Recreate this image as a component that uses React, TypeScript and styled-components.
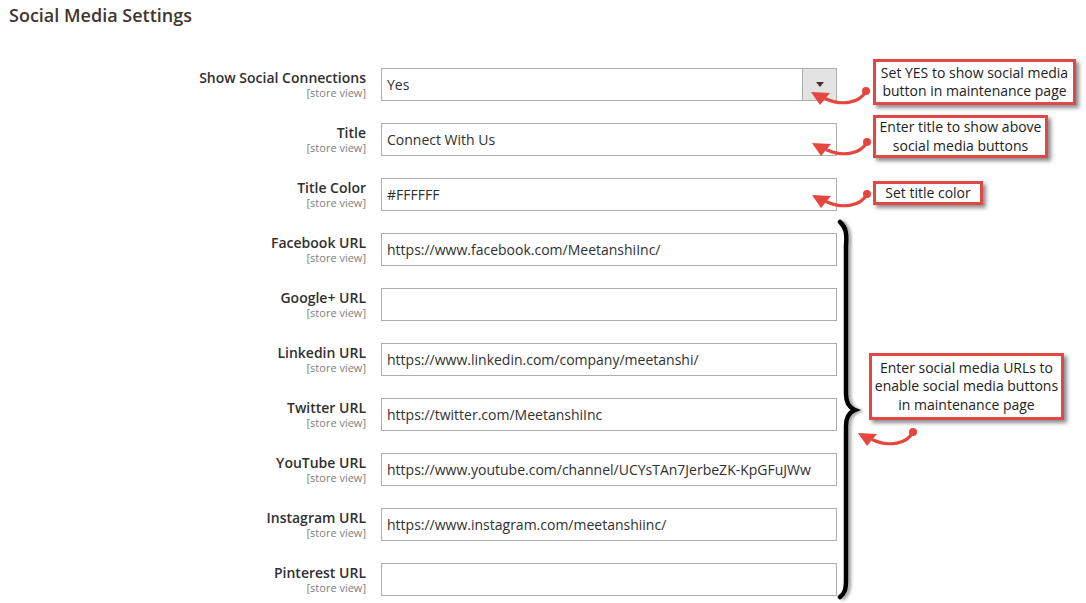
import React from "react";
import styled, { createGlobalStyle } from "styled-components";

const GlobalStyle = createGlobalStyle`
  html, body {
    margin: 0;
    padding: 0;
    background: #ffffff;
  }
  body {
    font-family: "Open Sans", "Liberation Sans", sans-serif;
  }
`;

interface Field {
  label: string;
  value: string;
  select?: boolean;
}

const fields: Field[] = [
  { label: "Show Social Connections", value: "Yes", select: true },
  { label: "Title", value: "Connect With Us" },
  { label: "Title Color", value: "#FFFFFF" },
  { label: "Facebook URL", value: "https://www.facebook.com/MeetanshiInc/" },
  { label: "Google+ URL", value: "" },
  { label: "Linkedin URL", value: "https://www.linkedin.com/company/meetanshi/" },
  { label: "Twitter URL", value: "https://twitter.com/MeetanshiInc" },
  {
    label: "YouTube URL",
    value: "https://www.youtube.com/channel/UCYsTAn7JerbeZK-KpGFuJWw",
  },
  { label: "Instagram URL", value: "https://www.instagram.com/meetanshiinc/" },
  { label: "Pinterest URL", value: "" },
];

// callouts over the form
const notes = [
  { left: 873, top: 59, width: 203, height: 46, lines: ["Set YES to show social media", "button in maintenance page"] },
  { left: 873, top: 115, width: 175, height: 43, lines: ["Enter title to show above", "social media buttons"] },
  { left: 873, top: 181, width: 110, height: 24, lines: ["Set title color"] },
  {
    left: 869,
    top: 353,
    width: 195,
    height: 67,
    lines: ["Enter social media URLs to", "enable social media buttons", "in maintenance page"],
  },
];

const arrows = [
  { x: 866, y: 91 },
  { x: 867, y: 142 },
  { x: 867, y: 194 },
  { x: 913, y: 432 },
];

const Arrow = ({ x, y }: { x: number; y: number }) => (
  <g transform={`translate(${x} ${y})`}>
    <path
      d="M0 0 C -6 12, -24 15, -40 8"
      fill="none"
      stroke="#e5473f"
      strokeWidth={3.2}
      strokeLinecap="round"
    />
    <circle cx={0} cy={0} r={4} fill="#e5473f" />
    <polygon points="-55,1 -36,2 -46,14" fill="#e5473f" />
  </g>
);

const App = () => {
  return (
    <Page>
      <GlobalStyle />
      <SectionTitle>Social Media Settings</SectionTitle>
      <Form>
        {fields.map((f) => (
          <React.Fragment key={f.label}>
            <LabelCell>
              <LabelText>{f.label}</LabelText>
              <Scope>[store view]</Scope>
            </LabelCell>
            {f.select ? (
              <SelectBox>
                <SelectValue>{f.value}</SelectValue>
                <SelectButton>
                  <Caret />
                </SelectButton>
              </SelectBox>
            ) : (
              <TextInput readOnly value={f.value} />
            )}
          </React.Fragment>
        ))}
      </Form>

      <Overlay width="1086" height="603" viewBox="0 0 1086 603">
        <defs>
          <filter id="braceShadow" x="-50%" y="-10%" width="200%" height="120%">
            <feDropShadow dx="3" dy="1" stdDeviation="1.6" floodColor="#000" floodOpacity="0.35" />
          </filter>
        </defs>
        <path
          d="M840 222 C 846 227, 847 234, 846 246 L 846 394 C 846 403, 850 408, 855 410 C 850 412, 846 417, 846 426 L 846 580 C 846 589, 845 593, 840 597"
          fill="none"
          stroke="#000"
          strokeWidth={4.5}
          strokeLinecap="round"
          filter="url(#braceShadow)"
        />
        {arrows.map((a, i) => (
          <Arrow key={i} x={a.x} y={a.y} />
        ))}
      </Overlay>

      {notes.map((n, i) => (
        <Callout key={i} style={{ left: n.left, top: n.top, width: n.width, height: n.height }}>
          {n.lines.map((l) => (
            <div key={l}>{l}</div>
          ))}
        </Callout>
      ))}
    </Page>
  );
};
export default App;

const Page = styled.div`
  position: relative;
  width: 1086px;
  height: 603px;
  overflow: hidden;
  background: #ffffff;
`;

const SectionTitle = styled.h2`
  margin: 0;
  padding: 3px 0 0 9px;
  font-size: 18px;
  line-height: 24px;
  font-weight: 600;
  color: #41362f;
`;

const Form = styled.div`
  display: grid;
  grid-template-columns: 366px 456px;
  grid-auto-rows: 33px;
  column-gap: 15px;
  row-gap: 22px;
  margin-top: 41px;
`;

const LabelCell = styled.div`
  display: flex;
  flex-direction: column;
  align-items: flex-end;
  text-align: right;
`;

const LabelText = styled.span`
  font-size: 14px;
  line-height: 19px;
  font-weight: 600;
  color: #303030;
`;

const Scope = styled.span`
  font-size: 11px;
  line-height: 12px;
  color: #808080;
`;

const TextInput = styled.input`
  box-sizing: border-box;
  width: 456px;
  height: 33px;
  margin: 0;
  padding: 0 5px;
  border: 1px solid #adadad;
  border-radius: 0;
  background: #ffffff;
  font-family: "Open Sans", "Liberation Sans", sans-serif;
  font-size: 14px;
  color: #303030;
  outline: none;
`;

const SelectBox = styled.div`
  box-sizing: border-box;
  display: flex;
  width: 456px;
  height: 33px;
  border: 1px solid #adadad;
  background: #ffffff;
`;

const SelectValue = styled.div`
  flex: 1;
  display: flex;
  align-items: center;
  padding: 0 5px;
  font-size: 14px;
  color: #303030;
`;

const SelectButton = styled.div`
  width: 33px;
  display: flex;
  align-items: center;
  justify-content: center;
  background: #e3e3e3;
  border-left: 1px solid #adadad;
`;

const Caret = styled.span`
  width: 0;
  height: 0;
  border-left: 4px solid transparent;
  border-right: 4px solid transparent;
  border-top: 5px solid #41362f;
  margin-top: -1px;
`;

const Overlay = styled.svg`
  position: absolute;
  left: 0;
  top: 0;
  pointer-events: none;
`;

const Callout = styled.div`
  position: absolute;
  box-sizing: border-box;
  display: flex;
  flex-direction: column;
  justify-content: center;
  padding: 0 2px;
  border: 3px solid #e04846;
  background: #ffffff;
  box-shadow: 3px 3px 4px rgba(0, 0, 0, 0.45);
  font-family: "Open Sans", "Liberation Sans", sans-serif;
  font-size: 14px;
  line-height: 18.5px;
  color: #222222;
  text-align: center;
  white-space: nowrap;
`;
